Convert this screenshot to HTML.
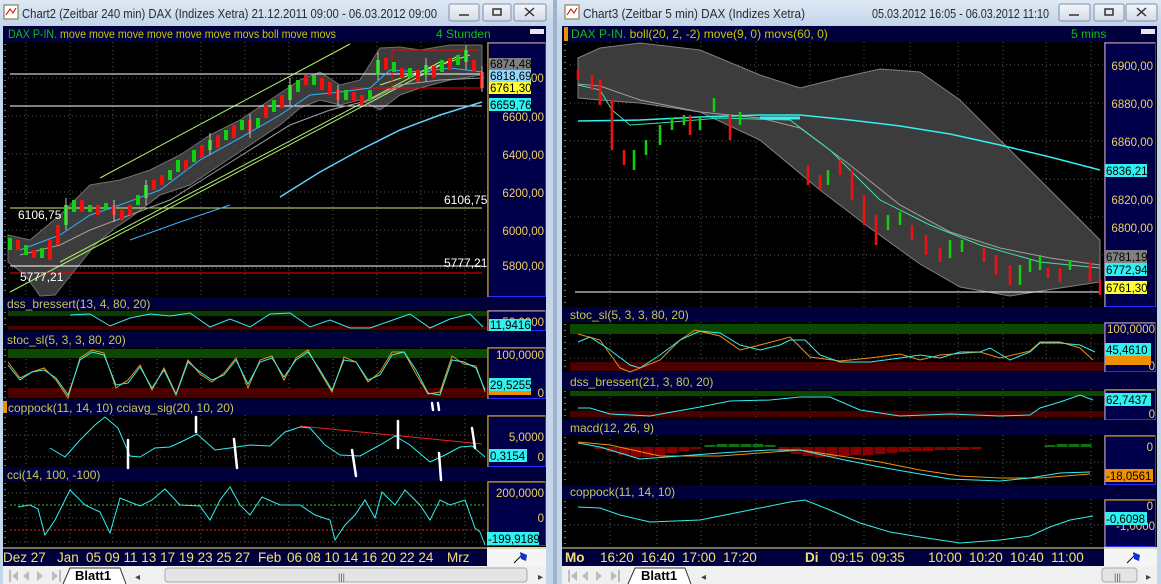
<!DOCTYPE html>
<html><head><meta charset="utf-8"><style>
html,body{margin:0;padding:0;background:#b9cde5;width:1161px;height:584px;overflow:hidden}
svg{display:block}
text{font-family:"Liberation Sans",sans-serif}
.ax{font-size:11.5px}
</style></head><body>
<svg width="1161" height="584" viewBox="0 0 1161 584" xmlns="http://www.w3.org/2000/svg">
<defs>
<linearGradient id="tb" x1="0" y1="0" x2="0" y2="1"><stop offset="0" stop-color="#dfe9f5"/><stop offset="1" stop-color="#c2d4ea"/></linearGradient>
<linearGradient id="btn" x1="0" y1="0" x2="0" y2="1"><stop offset="0" stop-color="#f4f7fb"/><stop offset="1" stop-color="#d2dbe7"/></linearGradient>
</defs>
<rect x="0" y="0" width="553" height="584" fill="#c4d6ec"/>
<rect x="557" y="0" width="604" height="584" fill="#c4d6ec"/>
<rect x="553" y="0" width="4" height="584" fill="#9fb3cc"/>
<rect x="0" y="0" width="553" height="26" fill="url(#tb)"/>
<rect x="557" y="0" width="604" height="26" fill="url(#tb)"/>
<rect x="4" y="5" width="14" height="14" fill="#fff" stroke="#7a6a30"/><path d="M6 15 L10 9 L13 13 L16 8" stroke="#c00" fill="none"/>
<rect x="565" y="5" width="14" height="14" fill="#fff" stroke="#7a6a30"/><path d="M567 15 L571 9 L574 13 L577 8" stroke="#c00" fill="none"/>
<text x="22" y="18" font-size="13" fill="#2a2a2a" textLength="415" lengthAdjust="spacingAndGlyphs">Chart2 (Zeitbar 240 min)  DAX (Indizes Xetra) 21.12.2011 09:00 - 06.03.2012 09:00</text>
<text x="583" y="18" font-size="13" fill="#2a2a2a" textLength="222" lengthAdjust="spacingAndGlyphs">Chart3 (Zeitbar 5 min)  DAX (Indizes Xetra)</text>
<text x="872" y="18" font-size="13" fill="#2a2a2a" textLength="177" lengthAdjust="spacingAndGlyphs">05.03.2012 16:05 - 06.03.2012 11:10</text>
<g stroke="#7f8fa6" fill="url(#btn)">
<rect x="449" y="4" width="30" height="17" rx="2"/><rect x="483" y="4" width="28" height="17" rx="2"/><rect x="514" y="4" width="32" height="17" rx="2"/>
<rect x="1059" y="4" width="31" height="17" rx="2"/><rect x="1094" y="4" width="30" height="17" rx="2"/><rect x="1126" y="4" width="31" height="17" rx="2"/>
</g>
<g stroke="#333" fill="none" stroke-width="1.5">
<path d="M459 15 h10"/><rect x="493" y="9" width="8" height="6"/><path d="M525 8 l9 8 M534 8 l-9 8"/>
<path d="M1069 15 h10"/><rect x="1105" y="9" width="8" height="6"/><path d="M1137 8 l9 8 M1146 8 l-9 8"/>
</g>

<!-- LEFT -->
<rect x="3" y="26" width="543" height="521" fill="#000"/>
<g fill="#00003c">
<rect x="3" y="26" width="543" height="16"/>
<rect x="3" y="297" width="543" height="13"/>
<rect x="3" y="331" width="543" height="16"/>
<rect x="3" y="399" width="543" height="16"/>
<rect x="3" y="467" width="543" height="14"/>
</g>
<rect x="530" y="29" width="14" height="5" fill="#e8e8e8"/>
<rect x="3" y="401" width="4" height="12" fill="#f09000"/>
<text x="8" y="38" font-size="12" textLength="328" lengthAdjust="spacingAndGlyphs"><tspan fill="#10c010">DAX P-IN.</tspan><tspan fill="#c8c800"> move move move move move move movs boll move movs</tspan></text>
<text x="436" y="38" font-size="12" fill="#10c010">4 Stunden</text>
<g font-size="12" fill="#c8c850">
<text x="7" y="308">dss_bressert(13, 4, 80, 20)</text>
<text x="7" y="344">stoc_sl(5, 3, 3, 80, 20)</text>
<text x="8" y="412">coppock(11, 14, 10) cciavg_sig(20, 10, 20)</text>
<text x="7" y="479">cci(14, 100, -100)</text>
</g>
<g fill="#00004a" stroke="#2a2aff">
<rect x="487.5" y="42.5" width="58" height="254"/>
<rect x="487.5" y="310.5" width="58" height="20"/>
<rect x="487.5" y="347.5" width="58" height="51"/>
<rect x="487.5" y="415.5" width="58" height="51"/>
<rect x="487.5" y="481.5" width="58" height="64"/>
</g>
<g stroke="#e0b020" fill="none">
<path d="M488 297 V43 H545"/><path d="M488 331 V311 H545"/><path d="M488 399 V348 H545"/><path d="M488 467 V416 H545"/><path d="M488 546 V482 H545"/>
</g>
<g stroke="#5a5a5a" stroke-dasharray="1 3">
<path d="M26 42V297M70 42V297M113 42V297M157 42V297M201 42V297M245 42V297M289 42V297M333 42V297M377 42V297M421 42V297M465 42V297"/>
<path d="M8 78H486M8 116H486M8 154H486M8 192H486M8 230H486M8 268H486"/>
<path d="M26 347V399M70 347V399M113 347V399M157 347V399M201 347V399M245 347V399M289 347V399M333 347V399M377 347V399M421 347V399M465 347V399"/>
<path d="M26 415V467M70 415V467M113 415V467M157 415V467M201 415V467M245 415V467M289 415V467M333 415V467M377 415V467M421 415V467M465 415V467M8 435H486M8 457H486"/>
<path d="M26 481V545M70 481V545M113 481V545M157 481V545M201 481V545M245 481V545M289 481V545M333 481V545M377 481V545M421 481V545M465 481V545M8 493H486M8 518H486M8 542H486"/>
</g>
<g stroke="#ddd" stroke-dasharray="1 5">
<path d="M5 44V296M5 312V330M5 349V398M5 417V466M5 483V545"/>
</g>
<polygon fill="#3c3c3c" stroke="#707070" points="8,235 30,240 60,215 90,185 120,180 150,170 180,155 210,135 240,120 270,100 300,80 320,72 340,85 360,80 380,48 400,47 420,50 450,45 482,45 482,75 450,80 420,88 400,95 380,110 360,100 340,105 320,100 300,108 280,125 250,145 220,165 190,185 160,195 130,218 115,228 95,245 75,270 55,295 40,296 25,275 8,262"/>
<g stroke="#b0f070" fill="none">
<path d="M100 178 L350 44"/><path d="M10 292 L460 55"/><path d="M60 262 L440 62"/><path d="M380 85 L470 55"/>
</g>
<g stroke="#fff"><path d="M10 74H482M10 106H482M10 266H482"/></g>
<g stroke="#f00"><path d="M10 273H482M350 88H482M392 50H478M392 50V88"/></g>
<path d="M10 208H482" stroke="#c8f080"/>
<polyline fill="none" stroke="#30b0ff" points="20,250 60,235 90,215 120,205 160,190 200,160 240,138 280,115 310,95 340,92 370,88 390,70 420,72 450,68 482,72"/>
<polyline fill="none" stroke="#a0a0a0" points="20,255 60,245 90,230 130,215 170,200 210,175 250,150 290,125 330,110 370,100 400,85 440,80 482,78"/>
<polyline fill="none" stroke="#60d0ff" stroke-width="1.5" points="280,197 320,172 360,150 400,130 440,115 482,102"/>
<polyline fill="none" stroke="#40b0ff" points="130,240 180,222 230,205"/>
<path fill="none" stroke="#10d010" stroke-width="4" d="M10 238V250M26 245V255M42 248V258M66 205V225M74 200V212M90 205V212M106 203V210M138 195V205M146 185V198M170 170V180M178 160V172M194 150V162M210 140V150M226 130V140M242 120V130M258 118V128M274 100V112M290 85V100M298 80V92M314 75V85M346 90V100M370 90V100M378 60V75M394 62V72M410 68V78M426 65V75M442 60V72M458 55V65M466 50V62"/>
<path fill="none" stroke="#f01010" stroke-width="4" d="M18 240V250M34 250V258M50 240V260M58 225V245M82 200V212M98 205V215M114 205V215M122 210V220M130 205V215M154 180V190M162 175V185M186 160V170M202 145V158M218 135V148M234 125V138M250 120V132M266 105V118M282 95V108M306 75V85M322 78V90M330 82V95M338 90V100M354 92V102M362 95V105M386 58V70M402 68V78M418 70V82M434 66V78M450 58V70M474 60V72M482 72V88"/>
<path fill="none" stroke="#c0c0c0" stroke-width="1" d="M66 198V230M146 180V205M210 133V155M290 78V105M378 52V80M426 58V82M466 45V70M114 200V222M250 114V138M338 85V106M482 66V92"/>
<g font-size="12" fill="#fff"><text x="18" y="219">6106,75</text><text x="444" y="204">6106,75</text><text x="444" y="267">5777,21</text><text x="20" y="281">5777,21</text></g>
<rect x="489" y="58" width="42" height="12" fill="#808080"/><text class="ax" x="490" y="68" fill="#000">6874,48</text>
<rect x="489" y="70" width="42" height="12" fill="#90d8ff"/><text class="ax" x="490" y="80" fill="#000">6818,69</text>
<text class="ax" x="531" y="82" fill="#f0d060">00</text>
<rect x="489" y="82" width="42" height="12" fill="#ffff30"/><text class="ax" x="490" y="92" fill="#000">6761,30</text>
<rect x="489" y="98" width="42" height="13" fill="#30f0f0"/><text class="ax" x="490" y="109" fill="#000">6659,76</text>
<g class="ax" fill="#f0d060" text-anchor="end">
<text x="544" y="121">6600,00</text><text x="544" y="159">6400,00</text><text x="544" y="197">6200,00</text><text x="544" y="235">6000,00</text><text x="544" y="270">5800,00</text>
<text x="544" y="326">50,0000</text>
<text x="544" y="359">100,0000</text><text x="544" y="397">0</text>
<text x="544" y="441">5,0000</text><text x="544" y="461">0</text>
<text x="544" y="497">200,0000</text><text x="544" y="522">0</text>
</g>
<rect x="489" y="319" width="42" height="12" fill="#30f0f0"/><text class="ax" x="490" y="329" fill="#000">11,9416</text>
<rect x="489" y="390" width="42" height="5" fill="#f09000"/>
<rect x="489" y="378" width="42" height="13" fill="#30f0f0"/><text class="ax" x="490" y="389" fill="#000">29,5255</text>
<rect x="489" y="449" width="38" height="13" fill="#30f0f0"/><text class="ax" x="490" y="460" fill="#000">0,3154</text>
<rect x="487" y="532" width="52" height="13" fill="#30f0f0"/><text class="ax" x="488" y="543" fill="#000">-199,9189</text>
<rect x="8" y="311" width="479" height="5" fill="#0a3d00"/><rect x="8" y="326" width="479" height="4" fill="#4a0000"/>
<polyline fill="none" stroke="#30f0f0" points="70,315 90,314 110,326 130,318 150,314 170,316 190,313 210,327 230,319 250,327 270,314 290,313 310,327 330,320 350,328 370,328 390,321 410,314 430,328 450,319 470,314 483,327"/>
<rect x="8" y="349" width="479" height="9" fill="#0a4a00"/><rect x="8" y="388" width="479" height="10" fill="#4a0000"/>
<polyline fill="none" stroke="#f09010" points="8,362 20,378 32,372 44,368 56,380 68,398 80,358 92,350 104,353 116,388 128,380 140,365 152,390 164,368 176,394 188,360 200,374 212,382 224,373 236,358 248,388 260,360 272,356 284,380 296,358 308,350 320,372 332,392 344,357 356,362 368,382 380,372 392,352 404,352 416,374 428,394 440,392 452,356 464,364 476,366 485,392"/>
<polyline fill="none" stroke="#30f0f0" points="8,365 20,380 32,372 44,370 56,378 68,395 80,360 92,352 104,355 116,385 128,383 140,367 152,388 164,370 176,395 188,362 200,372 212,380 224,375 236,360 248,384 260,362 272,358 284,377 296,360 308,352 320,370 332,390 344,360 356,362 368,380 380,375 392,355 404,352 416,370 428,393 440,395 452,360 464,362 476,368 485,390"/>
<path d="M300 426 L482 444" stroke="#f02020" fill="none"/>
<polyline fill="none" stroke="#30f0f0" points="50,448 65,457 80,440 95,425 105,417 118,428 130,456 140,457 155,448 170,447 185,440 197,434 215,450 230,448 250,445 270,446 285,432 300,427 310,428 325,445 340,455 360,456 380,445 395,436 410,445 430,462 445,455 460,447 472,446 485,457"/>
<g stroke="#fff" stroke-width="2.5" fill="none" stroke-linecap="round">
<path d="M128 440V468M196 417V432M234 439L237 468M352 450L356 476M398 421V448M439 453L441 480M472 428L475 448M432 403L433 410M438 403L439 410"/>
</g>
<path d="M10 505H486" stroke="#30c030" stroke-dasharray="2 2"/><path d="M10 530H486" stroke="#f02020" stroke-dasharray="2 2"/>
<polyline fill="none" stroke="#30f0f0" points="18,507 30,505 38,509 45,535 55,520 65,500 70,490 85,505 100,512 110,533 120,498 140,506 152,500 165,489 180,505 200,506 210,520 220,500 230,487 240,505 250,515 262,497 280,505 300,505 315,515 330,520 335,540 345,525 355,515 365,500 375,518 382,492 395,505 405,490 420,505 430,520 440,500 450,505 465,500 475,528 480,532 485,545"/>
<rect x="3" y="547" width="484" height="19" fill="#00003c"/>
<path d="M3 548H546" stroke="#f0e070"/>
<rect x="487" y="549" width="59" height="17" fill="#f5f5f5"/>
<path d="M514 563 L522 555" stroke="#000"/><path d="M520 552 L527 555 L526 561 L521 559 Z" fill="#1030d0"/>
<g font-size="13.5" fill="#f0e070">
<text x="3" y="562">Dez 27</text><text x="57" y="562">Jan</text><text x="86" y="562">05 09 11 13 17 19 23 25 27</text><text x="258" y="562">Feb</text><text x="287" y="562">06 08 10 14 16 20 22 24</text><text x="447" y="562">Mrz</text>
</g>
<rect x="3" y="566" width="543" height="18" fill="#f0f0f0"/>
<g fill="#bbb"><path d="M9 570h2v12h-2zM12 576l6-5v10z M23 576l6-5v10z M37 571l6 5-6 5z M52 571l6 5-6 5zM59 570h2v12h-2z"/></g>
<path d="M63 584 L70 568 H120 L126 584" fill="#fff" stroke="#333"/>
<text x="75" y="580" font-size="13" font-weight="bold" fill="#000">Blatt1</text>
<rect x="165" y="568" width="362" height="14" rx="3" fill="#e4e4e4" stroke="#aaa"/>
<text x="135" y="580" font-size="10" fill="#444">◂</text><text x="538" y="580" font-size="10" fill="#444">▸</text>
<text x="338" y="580" font-size="9" fill="#555">|||</text>

<!-- RIGHT -->
<rect x="562" y="26" width="595" height="521" fill="#000"/>
<g fill="#00003c">
<rect x="562" y="26" width="595" height="16"/>
<rect x="562" y="307" width="595" height="15"/>
<rect x="562" y="372" width="595" height="17"/>
<rect x="562" y="420" width="595" height="15"/>
<rect x="562" y="485" width="595" height="14"/>
</g>
<rect x="564" y="27" width="4" height="14" fill="#f09000"/>
<rect x="1141" y="29" width="14" height="5" fill="#e8e8e8"/>
<text x="571" y="38" font-size="12"><tspan fill="#10c010">DAX P-IN.</tspan><tspan fill="#c8c800"> boll(20, 2, -2) move(9, 0) movs(60, 0)</tspan></text>
<text x="1071" y="38" font-size="12" fill="#10c010">5 mins</text>
<g font-size="12" fill="#c8c850">
<text x="570" y="319">stoc_sl(5, 3, 3, 80, 20)</text>
<text x="570" y="386">dss_bressert(21, 3, 80, 20)</text>
<text x="570" y="432">macd(12, 26, 9)</text>
<text x="570" y="496">coppock(11, 14, 10)</text>
</g>
<g fill="#00004a" stroke="#2a2aff">
<rect x="1104.5" y="42.5" width="51" height="264"/>
<rect x="1104.5" y="322.5" width="51" height="49"/>
<rect x="1104.5" y="389.5" width="51" height="30"/>
<rect x="1104.5" y="435.5" width="51" height="49"/>
<rect x="1104.5" y="499.5" width="51" height="47"/>
</g>
<g stroke="#e0b020" fill="none">
<path d="M1105 307V43H1155M1105 372V323H1155M1105 420V390H1155M1105 485V436H1155M1105 547V500H1155"/>
</g>
<g stroke="#5a5a5a" stroke-dasharray="1 3">
<path d="M610 42V307M657 42V307M701 42V307M756 42V307M810 42V307M864 42V307M910 42V307M958 42V307M1003 42V307M1046 42V307M1091 42V307"/>
<path d="M570 65H1103M570 103H1103M570 141H1103M570 179H1103M570 217H1103M570 255H1103"/>
<path d="M610 322V372M657 322V372M701 322V372M756 322V372M810 322V372M864 322V372M910 322V372M958 322V372M1003 322V372M1046 322V372M1091 322V372M570 344H1103M570 358H1103"/>
<path d="M610 389V420M657 389V420M701 389V420M756 389V420M810 389V420M864 389V420M910 389V420M958 389V420M1003 389V420M1046 389V420M1091 389V420"/>
<path d="M610 435V485M657 435V485M701 435V485M756 435V485M810 435V485M864 435V485M910 435V485M958 435V485M1003 435V485M1046 435V485M1091 435V485M570 462H1103"/>
<path d="M610 499V547M657 499V547M701 499V547M756 499V547M810 499V547M864 499V547M910 499V547M958 499V547M1003 499V547M1046 499V547M1091 499V547M570 525H1103"/>
</g>
<g stroke="#ddd" stroke-dasharray="1 5"><path d="M565 44V306M565 324V371M565 391V419M565 437V484M565 501V546"/></g>
<polygon fill="#3c3c3c" stroke="#808080" points="578,98 578,58 600,48 640,43 700,50 760,75 800,88 840,78 880,69 920,72 960,100 1000,140 1040,180 1070,210 1100,240 1100,282 1060,288 1010,296 960,287 920,264 870,228 820,190 760,140 700,112 640,103 600,100"/>
<polyline fill="none" stroke="#a0a0a0" points="578,84 600,86 640,100 700,112 760,118 800,128 850,165 900,205 950,232 1000,248 1050,258 1100,265"/>
<polyline fill="none" stroke="#40e0a0" points="578,85 600,90 612,110 630,125 660,123 720,118 790,120 830,150 880,200 930,225 980,245 1040,262 1100,268"/>
<polyline fill="none" stroke="#30f0f0" stroke-width="1.5" points="578,121 640,120 700,117 760,115 800,115 850,120 900,126 950,134 1000,145 1050,157 1100,170"/>
<path d="M575 292H1100" stroke="#fff"/>
<path fill="none" stroke="#f01010" stroke-width="2.5" d="M578 70V80M592 75V90M600 80V105M612 100V150M624 150V165M690 115V135M730 115V140M808 165V185M820 175V190M840 160V175M852 170V200M864 195V225M876 215V245M912 225V240M926 235V255M940 248V262M984 248V262M996 255V275M1010 265V285M1048 268V278M1060 268V282M1090 262V282M1100 280V295"/>
<path fill="none" stroke="#10d010" stroke-width="2.5" d="M634 150V170M646 140V155M660 125V145M672 118V130M684 115V125M700 118V130M714 98V112M740 112V125M828 170V185M888 215V230M900 212V225M950 240V258M962 240V252M1020 265V285M1030 260V272M1040 255V270M1070 260V270"/>
<path d="M760 118H800" stroke="#30f0f0" stroke-width="3"/>
<g class="ax" fill="#f0d060" text-anchor="end">
<text x="1153" y="70">6900,00</text><text x="1153" y="108">6880,00</text><text x="1153" y="146">6860,00</text><text x="1153" y="204">6820,00</text><text x="1153" y="232">6800,00</text>
</g>
<rect x="1105" y="164" width="42" height="13" fill="#30f0f0"/><text class="ax" x="1106" y="175" fill="#000">6836,21</text>
<rect x="1105" y="250" width="42" height="13" fill="#808080"/><text class="ax" x="1106" y="261" fill="#000">6781,19</text>
<rect x="1105" y="263" width="42" height="13" fill="#30f0f0"/><text class="ax" x="1106" y="274" fill="#000">6772,94</text>
<rect x="1105" y="281" width="42" height="13" fill="#ffff30"/><text class="ax" x="1106" y="292" fill="#000">6761,30</text>
<rect x="570" y="324" width="534" height="10" fill="#0a4a00"/><rect x="570" y="362" width="534" height="9" fill="#4a0000"/>
<polyline fill="none" stroke="#f09010" points="578,334 600,340 620,368 630,372 660,360 680,340 695,330 720,336 740,350 760,345 790,337 810,357 840,361 870,358 900,354 920,360 940,355 980,352 1000,358 1030,351 1040,342 1060,342 1080,348 1093,360"/>
<polyline fill="none" stroke="#30f0f0" points="578,342 590,337 610,350 630,365 640,368 660,355 680,340 700,331 720,333 740,345 760,350 780,345 790,340 805,340 820,355 840,362 870,362 900,358 920,355 940,358 960,352 980,352 990,348 1010,360 1030,352 1040,343 1060,343 1080,345 1095,352"/>
<g class="ax" fill="#f0d060" text-anchor="end"><text x="1155" y="333">100,0000</text><text x="1155" y="370">0</text><text x="1155" y="418">0</text><text x="1153" y="451">0</text><text x="1153" y="510">0</text><text x="1155" y="530">-1,0000</text></g>
<rect x="1105" y="356" width="46" height="9" fill="#f09000"/>
<rect x="1105" y="343" width="46" height="13" fill="#30f0f0"/><text class="ax" x="1106" y="354" fill="#000">45,4610</text>
<rect x="570" y="391" width="534" height="5" fill="#0a4a00"/><rect x="570" y="411" width="534" height="6" fill="#4a0000"/>
<polyline fill="none" stroke="#30f0f0" points="578,408 590,408 610,414 650,416 700,407 730,401 770,400 800,397 830,397 860,410 900,416 950,414 1000,416 1030,415 1040,408 1060,402 1080,395 1093,400"/>
<rect x="1105" y="393" width="46" height="13" fill="#30f0f0"/><text class="ax" x="1106" y="404" fill="#000">62,7437</text>
<path fill="none" stroke="#8a0000" stroke-width="11" d="M600 447V449M612 447V452M624 447V455M636 447V457M648 447V457M660 447V455M672 447V453M684 447V451M696 447V449M784 447V452M796 447V454M808 447V456M820 447V457M832 447V457M844 447V456M856 447V455M868 447V455M880 447V454M892 447V453M904 447V452M916 447V451M928 447V451M940 447V450M952 447V450M964 447V450M976 447V449"/>
<path fill="none" stroke="#107010" stroke-width="11" d="M710 447V445M722 447V444M734 447V444M746 447V444M758 447V444M770 447V445M1050 447V445M1062 447V444M1074 447V444M1086 447V444"/>
<polyline fill="none" stroke="#f09010" points="578,442 610,445 660,456 720,456 800,450 840,456 880,462 920,470 960,476 1000,478 1040,478 1090,474"/>
<polyline fill="none" stroke="#30f0f0" points="578,443 600,447 640,459 680,456 720,453 770,450 800,450 840,459 880,467 920,474 950,479 1000,481 1030,478 1060,473 1090,472"/>
<rect x="1105" y="469" width="48" height="13" fill="#f09000"/><text class="ax" x="1106" y="480" fill="#000">-18,0561</text>
<polyline fill="none" stroke="#30f0f0" points="578,507 600,508 620,515 650,522 700,520 750,510 790,502 805,500 830,510 860,523 890,532 920,537 960,543 1000,540 1030,536 1050,527 1070,520 1093,516"/>
<rect x="1105" y="512" width="42" height="13" fill="#30f0f0"/><text class="ax" x="1106" y="523" fill="#000">-0,6098</text>
<rect x="562" y="547" width="542" height="19" fill="#00003c"/>
<path d="M562 548H1157" stroke="#f0e070"/>
<rect x="1104" y="549" width="53" height="17" fill="#f5f5f5"/>
<path d="M1127 563 L1135 555" stroke="#000"/><path d="M1133 552 L1140 555 L1139 561 L1134 559 Z" fill="#1030d0"/>
<g font-size="13.5" fill="#f0e070">
<text x="565" y="562" font-weight="bold">Mo</text><text x="600" y="562">16:20</text><text x="641" y="562">16:40</text><text x="682" y="562">17:00</text><text x="723" y="562">17:20</text>
<text x="805" y="562" font-weight="bold">Di</text><text x="830" y="562">09:15</text><text x="871" y="562">09:35</text><text x="928" y="562">10:00</text><text x="969" y="562">10:20</text><text x="1010" y="562">10:40</text><text x="1051" y="562">11:00</text>
</g>
<rect x="562" y="566" width="595" height="18" fill="#f0f0f0"/>
<g fill="#bbb"><path d="M568 570h2v12h-2zM571 576l6-5v10z M582 576l6-5v10z M596 571l6 5-6 5z M611 571l6 5-6 5zM618 570h2v12h-2z"/></g>
<path d="M628 584 L635 568 H685 L691 584" fill="#fff" stroke="#333"/>
<text x="641" y="580" font-size="13" font-weight="bold" fill="#000">Blatt1</text>
<text x="701" y="580" font-size="10" fill="#444">◂</text><text x="1146" y="580" font-size="10" fill="#444">▸</text>
<rect x="1102" y="568" width="35" height="14" rx="3" fill="#e4e4e4" stroke="#aaa"/>
<text x="1114" y="580" font-size="9" fill="#555">|||</text>
</svg>
</body></html>
